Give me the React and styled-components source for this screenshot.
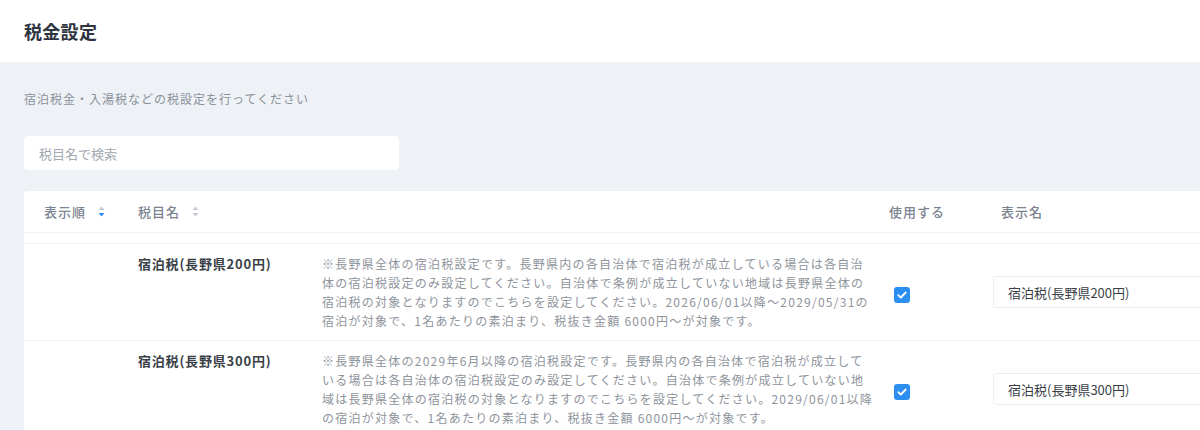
import React from "react";
import styled, { createGlobalStyle } from "styled-components";

const Global = createGlobalStyle`
  html, body { margin: 0; padding: 0; overflow: hidden; }
  body {
    font-family: "Noto Sans CJK JP", "Noto Sans", sans-serif;
    background: #eef1f5;
    color: #333;
  }
`;

const Page = styled.div`
  width: 1200px;
  min-height: 430px;
  overflow: hidden;
`;

const TopBar = styled.header`
  height: 62px;
  background: #fff;
  display: flex;
  align-items: center;
  padding: 0 24px;
`;

const Title = styled.h1`
  margin: 0;
  font-size: 18px;
  font-weight: 700;
  color: #2f3540;
  letter-spacing: 0.3px;
`;

const Main = styled.main`
  padding: 27px 0 0 24px;
  width: 1340px;
`;

const Lead = styled.p`
  margin: 0;
  font-size: 12px;
  line-height: 20px;
  letter-spacing: 1px;
  color: #8a919b;
`;

const Search = styled.input`
  display: block;
  margin-top: 27px;
  width: 375px;
  height: 34px;
  box-sizing: border-box;
  border: none;
  border-radius: 4px;
  background: #fff;
  padding: 0 15px;
  font-family: inherit;
  font-size: 13px;
  color: #333;
  outline: none;
  &::placeholder { color: #a3a9b1; }
`;

const Card = styled.div`
  margin-top: 21px;
  background: #fff;
  border-radius: 4px 4px 0 0;
`;

const Table = styled.table`
  width: 100%;
  border-collapse: collapse;
  table-layout: fixed;
`;

const Th = styled.th`
  height: 41px;
  padding: 0 0 0 20px;
  text-align: left;
  font-size: 13px;
  font-weight: 500;
  letter-spacing: 1px;
  color: #7c8390;
  border-bottom: 1px solid #f1f3f6;
  white-space: nowrap;
`;

const Spacer = styled.td`
  height: 10px;
  padding: 0;
  border-bottom: 1px solid #f1f3f6;
`;

const Td = styled.td`
  padding: ${(p) => p.$pad || "10px 0 10px 20px"};
  vertical-align: ${(p) => p.$valign || "top"};
  border-bottom: 1px solid #f1f3f6;
`;

const HeadLabel = styled.span`
  display: inline-flex;
  align-items: center;
  gap: 12px;
`;

const Name = styled.div`
  font-size: 13px;
  font-weight: 700;
  line-height: 19px;
  letter-spacing: 0.8px;
  color: #3a3f47;
`;

const Desc = styled.div`
  font-size: 12px;
  line-height: 19px;
  letter-spacing: 1.25px;
  color: #8e949c;
  width: 552px;
`;

const Check = styled.span`
  display: inline-flex;
  align-items: center;
  justify-content: center;
  width: 16px;
  height: 16px;
  border-radius: 3px;
  background: #2b8ef0;
  margin-left: 5px;
`;

const NameInput = styled.input`
  display: block;
  width: 320px;
  height: 32px;
  box-sizing: border-box;
  border: 1px solid #eceef2;
  border-radius: 3px;
  padding: 0 14px;
  font-family: inherit;
  font-size: 13px;
  color: #3a3f47;
  background: #fff;
  outline: none;
`;

function SortIcon({ active }) {
  return (
    <svg width="7" height="11" viewBox="0 0 7 11">
      <path d="M3.5 0.5 L6.5 4 H0.5 Z" fill="#c5cad2" />
      <path d="M3.5 10.5 L6.5 7 H0.5 Z" fill={active ? "#2d8cf0" : "#c5cad2"} />
    </svg>
  );
}

function CheckBox() {
  return (
    <Check>
      <svg width="10" height="8" viewBox="0 0 10 8">
        <path d="M1.3 4.2 L3.8 6.5 L8.7 1.5" fill="none" stroke="#fff" strokeWidth="1.8" strokeLinecap="round" strokeLinejoin="round" />
      </svg>
    </Check>
  );
}

const rows = [
  {
    name: "宿泊税(長野県200円)",
    desc: "※長野県全体の宿泊税設定です。長野県内の各自治体で宿泊税が成立している場合は各自治体の宿泊税設定のみ設定してください。自治体で条例が成立していない地域は長野県全体の宿泊税の対象となりますのでこちらを設定してください。2026/06/01以降～2029/05/31の宿泊が対象で、1名あたりの素泊まり、税抜き金額 6000円～が対象です。",
  },
  {
    name: "宿泊税(長野県300円)",
    desc: "※長野県全体の2029年6月以降の宿泊税設定です。長野県内の各自治体で宿泊税が成立している場合は各自治体の宿泊税設定のみ設定してください。自治体で条例が成立していない地域は長野県全体の宿泊税の対象となりますのでこちらを設定してください。2029/06/01以降の宿泊が対象で、1名あたりの素泊まり、税抜き金額 6000円～が対象です。",
  },
];

export default function App() {
  return (
    <Page>
      <Global />
      <TopBar>
        <Title>税金設定</Title>
      </TopBar>
      <Main>
        <Lead>宿泊税金・入湯税などの税設定を行ってください</Lead>
        <Search placeholder="税目名で検索" />
        <Card>
          <Table>
            <colgroup>
              <col style={{ width: 94 }} />
              <col style={{ width: 184 }} />
              <col style={{ width: 567 }} />
              <col style={{ width: 112 }} />
              <col />
            </colgroup>
            <thead>
              <tr>
                <Th>
                  <HeadLabel>表示順<SortIcon active /></HeadLabel>
                </Th>
                <Th>
                  <HeadLabel>税目名<SortIcon /></HeadLabel>
                </Th>
                <Th />
                <Th>使用する</Th>
                <Th>表示名</Th>
              </tr>
            </thead>
            <tbody>
              <tr>
                <Spacer colSpan={5} />
              </tr>
              {rows.map((r) => (
                <tr key={r.name}>
                  <Td />
                  <Td>
                    <Name>{r.name}</Name>
                  </Td>
                  <Td>
                    <Desc>{r.desc}</Desc>
                  </Td>
                  <Td $valign="middle">
                    <CheckBox />
                  </Td>
                  <Td $valign="middle" $pad="10px 0 10px 12px">
                    <NameInput defaultValue={r.name} />
                  </Td>
                </tr>
              ))}
            </tbody>
          </Table>
        </Card>
      </Main>
    </Page>
  );
}
